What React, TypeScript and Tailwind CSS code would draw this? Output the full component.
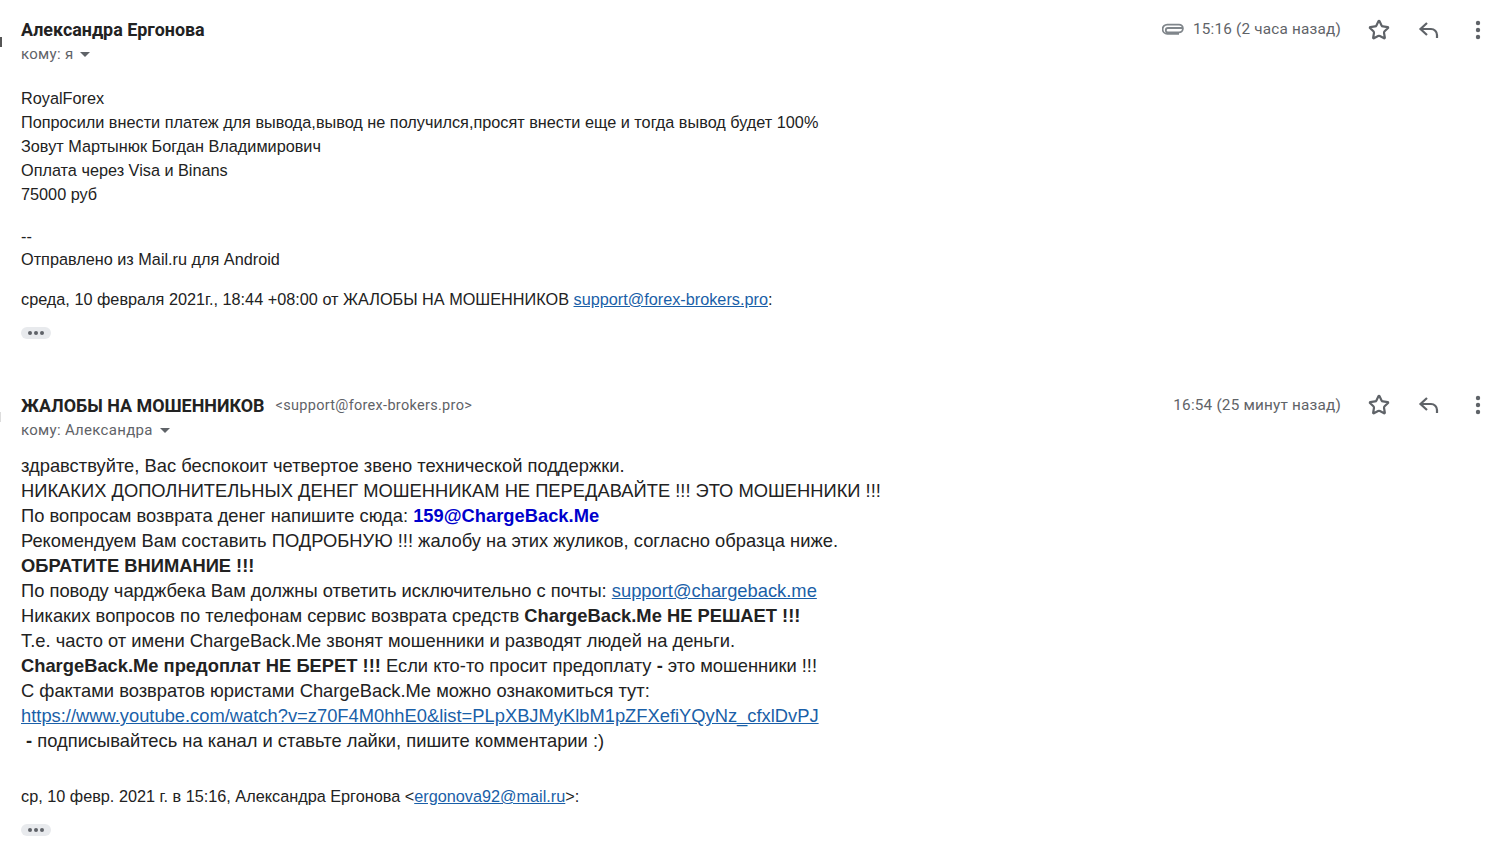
import React from 'react';
import { Star } from 'lucide-react';

const sans = "font-['Liberation_Sans',Arial,sans-serif]";
const roboto = "font-['Roboto',Arial,sans-serif]";

const Link = ({ children }: { children: React.ReactNode }) => (
  <a className="text-[#1a5fa8] underline">{children}</a>
);

const Pill = () => (
  <div className="w-[30px] h-[12px] rounded-full bg-[#e8eaed] flex items-center justify-center gap-[2px]">
    <span className="w-[4px] h-[4px] rounded-full bg-[#5f6368]" />
    <span className="w-[4px] h-[4px] rounded-full bg-[#5f6368]" />
    <span className="w-[4px] h-[4px] rounded-full bg-[#5f6368]" />
  </div>
);

const Clip = () => (
  <svg width="22" height="13" viewBox="0 0 22 13" fill="none" stroke="#80868b" strokeWidth="1.8">
    <path d="M20 5H6a2.2 2.2 0 0 0 0 4.4H17a3.4 3.4 0 0 0 0-7.8H5.2a4.6 4.6 0 0 0 0 9.2H17" />
  </svg>
);

const ReplyIcon = () => (
  <svg width="24" height="24" viewBox="0 0 24 24" fill="none" stroke="#5f6368" strokeWidth="2.2" className="ml-[27px]">
    <path d="M10 5 3.5 11 10 17" />
    <path d="M4 11h10a6 6 0 0 1 6 6v3" />
  </svg>
);

const Dots = () => (
  <svg width="24" height="24" viewBox="0 0 24 24" fill="#5f6368" className="ml-[25px] mr-[18px]">
    <circle cx="12" cy="5" r="2.2" />
    <circle cx="12" cy="12" r="2.2" />
    <circle cx="12" cy="19" r="2.2" />
  </svg>
);

const Actions = ({ time, clip }: { time: string; clip?: boolean }) => (
  <div className="flex items-center h-[24px]">
    {clip && <span className="mr-[9px] -mt-[2px] flex items-center"><Clip /></span>}
    <span className={`${roboto} ${clip ? '-mt-[2px]' : 'mt-0'} text-[15.3px] text-[#5f6368] tracking-[0.2px]`}>{time}</span>
    <Star className="ml-[27px] w-[22px] h-[22px] text-[#5f6368]" strokeWidth={2.4} />
    <ReplyIcon />
    <Dots />
  </div>
);

const ToLine = ({ text, first }: { text: string; first?: boolean }) => (
  <div className={`${roboto} ${first ? 'mt-0' : 'mt-[1px]'} flex items-center h-[24px] text-[15px] text-[#5f6368] tracking-[0.3px]`}>
    {text}
    <span className="ml-[7px] mt-[1px] w-0 h-0 border-x-[5px] border-x-transparent border-t-[5px] border-t-[#5f6368]" />
  </div>
);

export default function App() {
  return (
    <div className="relative w-[1508px] h-[853px] overflow-hidden bg-white text-[#222222]">
      {/* edges of the cropped avatars */}
      <span className="absolute left-0 top-[37px] w-[2px] h-[10px] bg-[#555555]" />
      <span className="absolute left-0 top-[412px] w-[1px] h-[10px] bg-[#dddddd]" />

      <div className="pl-[21px] pt-[18px]">
        <div className="flex justify-between items-center h-[24px]">
          <span className={`${roboto} font-bold text-[17.9px]`}>Александра Ергонова</span>
          <Actions time="15:16 (2 часа назад)" clip />
        </div>
        <ToLine text="кому: я" first />

        <div className={`${sans} mt-[20px] text-[16.25px] leading-[24px]`}>
          <div>RoyalForex</div>
          <div>Попросили внести платеж для вывода,вывод не получился,просят внести еще и тогда вывод будет 100%</div>
          <div>Зовут Мартынюк Богдан Владимирович</div>
          <div>Оплата через Visa и Binans</div>
          <div>75000 руб</div>
          <div className="mt-[19px] leading-[22px]">--</div>
          <div>Отправлено из Mail.ru для Android</div>
        </div>

        <div className={`${sans} mt-[16px] text-[16.26px] leading-[24px]`}>
          среда, 10 февраля 2021г., 18:44 +08:00 от ЖАЛОБЫ НА МОШЕННИКОВ <Link>support@forex-brokers.pro</Link>:
        </div>
        <div className="mt-[16px]"><Pill /></div>

        <div className="mt-[54px] flex justify-between items-center h-[24px]">
          <span className="flex items-center mt-[2px]">
            <span className={`${roboto} font-bold text-[17.9px]`}>ЖАЛОБЫ НА МОШЕННИКОВ</span>
            <span className={`${roboto} ml-[11px] text-[14.5px] text-[#5f6368] tracking-[0.3px]`}>&lt;support@forex-brokers.pro&gt;</span>
          </span>
          <Actions time="16:54 (25 минут назад)" />
        </div>
        <ToLine text="кому: Александра" />

        <div className={`${sans} mt-[11px] text-[18.33px] leading-[25px]`}>
          <div>здравствуйте, Вас беспокоит четвертое звено технической поддержки.</div>
          <div>НИКАКИХ ДОПОЛНИТЕЛЬНЫХ ДЕНЕГ МОШЕННИКАМ НЕ ПЕРЕДАВАЙТЕ !!! ЭТО МОШЕННИКИ !!!</div>
          <div>По вопросам возврата денег напишите сюда: <b className="text-[#0000cc]">159@ChargeBack.Me</b></div>
          <div>Рекомендуем Вам составить ПОДРОБНУЮ !!! жалобу на этих жуликов, согласно образца ниже.</div>
          <div><b>ОБРАТИТЕ ВНИМАНИЕ !!!</b></div>
          <div>По поводу чарджбека Вам должны ответить исключительно с почты: <Link>support@chargeback.me</Link></div>
          <div>Никаких вопросов по телефонам сервис возврата средств <b>ChargeBack.Me НЕ РЕШАЕТ !!!</b></div>
          <div>Т.е. часто от имени ChargeBack.Me звонят мошенники и разводят людей на деньги.</div>
          <div><b>ChargeBack.Me предоплат НЕ БЕРЕТ !!!</b> Если кто-то просит предоплату <b>-</b> это мошенники !!!</div>
          <div>С фактами возвратов юристами ChargeBack.Me можно ознакомиться тут:</div>
          <div><Link>https://www.youtube.com/watch?v=z70F4M0hhE0&amp;list=PLpXBJMyKlbM1pZFXefiYQyNz_cfxlDvPJ</Link></div>
          <div>&nbsp;<b>-</b> подписывайтесь на канал и ставьте лайки, пишите комментарии :)</div>
        </div>

        <div className={`${sans} mt-[31px] text-[16.26px] leading-[24px]`}>
          ср, 10 февр. 2021 г. в 15:16, Александра Ергонова &lt;<Link>ergonova92@mail.ru</Link>&gt;:
        </div>
        <div className="mt-[16px]"><Pill /></div>
      </div>
    </div>
  );
}
